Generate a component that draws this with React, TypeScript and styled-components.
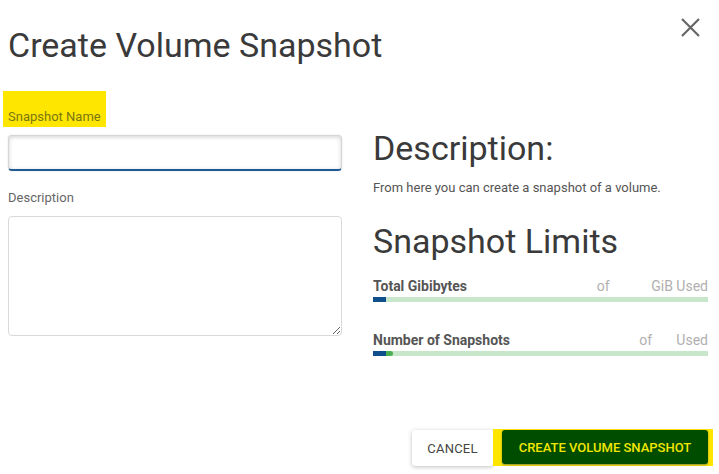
import React from "react";
import styled, { createGlobalStyle } from "styled-components";

const Global = createGlobalStyle`
  html, body { margin: 0; padding: 0; background: #fff; }
  body { font-family: Roboto, "Liberation Sans", Arial, sans-serif; color: #333; }
  * { box-sizing: border-box; }
`;

const Dialog = styled.div`
  width: 719px;
  height: 474px;
  display: flex;
  flex-direction: column;
`;

const Header = styled.div`
  display: flex;
  justify-content: space-between;
  align-items: flex-start;
  padding: 0 18px 0 8px;
  height: 91px;
`;

const Title = styled.h2`
  margin: 26px 0 0;
  font-size: 34px;
  font-weight: 400;
  color: #3a3a3a;
  line-height: 38px;
`;

const Close = styled.button`
  border: none;
  background: none;
  padding: 0;
  margin-top: 17px;
  width: 21px;
  height: 21px;
  cursor: pointer;
  display: flex;
`;

const Body = styled.div`
  display: grid;
  grid-template-columns: 334px 335px;
  column-gap: 31px;
  padding: 0 11px 0 8px;
`;

const LeftCol = styled.div`
  display: flex;
  flex-direction: column;
`;

const HighlightLabel = styled.label`
  align-self: flex-start;
  margin-left: -5px;
  background: #ffe600;
  color: #7a7610;
  font-size: 13px;
  padding: 18px 5px 2px 5px;
  line-height: 16px;
`;

const NameInput = styled.input`
  margin-top: 8px;
  height: 36px;
  width: 100%;
  border: 1px solid #d6d6d6;
  border-bottom: 2px solid #1f5a93;
  border-radius: 4px;
  box-shadow: inset 0 1px 4px rgba(0, 0, 0, 0.18), 0 0 2px rgba(0, 0, 0, 0.12);
  outline: none;
  font-family: inherit;
  font-size: 13px;
  padding: 0 8px;
`;

const Label = styled.label`
  margin-top: 19px;
  font-size: 13px;
  color: #666;
  line-height: 16px;
`;

const TextArea = styled.textarea`
  margin-top: 10px;
  height: 120px;
  width: 100%;
  border: 1px solid #d9d9d9;
  border-radius: 4px;
  font-family: inherit;
  font-size: 13px;
  padding: 6px 8px;
  outline: none;
  resize: vertical;
`;

const RightCol = styled.div`
  display: flex;
  flex-direction: column;
  padding-top: 37px;
`;

const Heading = styled.h3<{ $mt?: number }>`
  margin: ${(p) => p.$mt ?? 0}px 0 0;
  font-size: 34px;
  font-weight: 400;
  color: #3a3a3a;
  line-height: 40px;
`;

const Text = styled.p`
  margin: 12px 0 0;
  font-size: 13px;
  color: #555;
  line-height: 16px;
`;

const LimitRow = styled.div<{ $mt: number }>`
  margin-top: ${(p) => p.$mt}px;
  display: flex;
  flex-direction: column;
`;

const LimitHead = styled.div`
  display: flex;
  justify-content: space-between;
  align-items: baseline;
  font-size: 14px;
  line-height: 17px;
`;

const LimitName = styled.span`
  font-weight: 700;
  color: #555;
`;

const LimitValue = styled.span`
  color: #b0b0b0;
  white-space: pre;
`;

const Track = styled.div`
  margin-top: 2px;
  height: 5px;
  background: #c8e6c9;
  display: flex;
  align-items: stretch;
`;

const Used = styled.div`
  background: #0e4f8c;
`;

const Pending = styled.div`
  width: 7px;
  background: #4cb050;
  border-radius: 0 3px 3px 0;
`;

const Footer = styled.div`
  margin-top: auto;
  display: flex;
  justify-content: flex-end;
  align-items: flex-start;
  padding: 0 6px 8px 0;
`;

const CancelButton = styled.button`
  margin-top: 1px;
  width: 81px;
  height: 36px;
  border: none;
  border-radius: 3px;
  background: #fff;
  box-shadow: 0 1px 4px rgba(0, 0, 0, 0.25);
  font-family: inherit;
  font-size: 13px;
  color: #444;
  letter-spacing: 0.2px;
`;

const Highlight = styled.div`
  background: #ffe600;
  padding: 1px 5px 2px 9px;
  display: flex;
`;

const CreateButton = styled.button`
  width: 206px;
  height: 34px;
  border: none;
  border-radius: 3px;
  background: #004d00;
  color: #f2e600;
  font-family: inherit;
  font-size: 13px;
  font-weight: 500;
  box-shadow: 0 1px 2px rgba(20, 60, 120, 0.5);
`;

export default function App() {
  return (
    <>
      <Global />
      <Dialog>
        <Header>
          <Title>Create Volume Snapshot</Title>
          <Close aria-label="close">
            <svg width="21" height="21" viewBox="0 0 21 21">
              <path d="M2 2 L19 19 M19 2 L2 19" stroke="#666" strokeWidth="2.2" />
            </svg>
          </Close>
        </Header>
        <Body>
          <LeftCol>
            <HighlightLabel>Snapshot Name</HighlightLabel>
            <NameInput />
            <Label>Description</Label>
            <TextArea />
          </LeftCol>
          <RightCol>
            <Heading>Description:</Heading>
            <Text>From here you can create a snapshot of a volume.</Text>
            <Heading $mt={25}>Snapshot Limits</Heading>
            <LimitRow $mt={17}>
              <LimitHead>
                <LimitName>Total Gibibytes</LimitName>
                <LimitValue>{"of            GiB Used"}</LimitValue>
              </LimitHead>
              <Track>
                <Used style={{ width: 13 }} />
              </Track>
            </LimitRow>
            <LimitRow $mt={30}>
              <LimitHead>
                <LimitName>Number of Snapshots</LimitName>
                <LimitValue>{"of       Used"}</LimitValue>
              </LimitHead>
              <Track>
                <Used style={{ width: 13 }} />
                <Pending />
              </Track>
            </LimitRow>
          </RightCol>
        </Body>
        <Footer>
          <CancelButton>CANCEL</CancelButton>
          <Highlight>
            <CreateButton>CREATE VOLUME SNAPSHOT</CreateButton>
          </Highlight>
        </Footer>
      </Dialog>
    </>
  );
}
